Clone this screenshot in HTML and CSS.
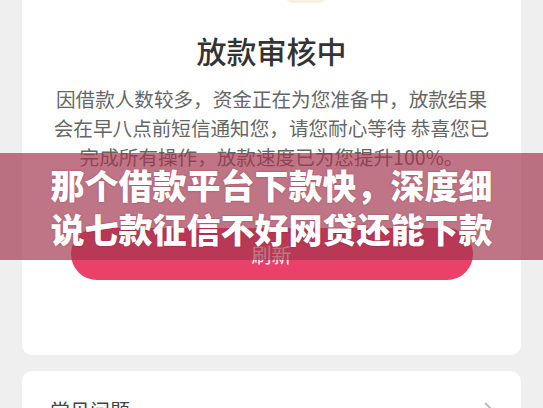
FILE: index.html
```html
<!DOCTYPE html>
<html lang="zh-CN">
<head>
    <meta charset="UTF-8">
    <meta name="viewport" content="width=device-width, initial-scale=1.0">
    <title>放款审核中</title>
    <link rel="stylesheet" href="styles.css">
</head>
<body>
    <div class="page">
        <div class="card status-card">
            <div class="status-icon">
                <svg width="120" height="43" viewBox="0 0 120 43">
                    <rect x="73" y="25" width="42" height="18" rx="8" fill="#f6f2e2"/>
                </svg>
            </div>
            <h1 class="status-title">放款审核中</h1>
            <p class="status-text">因借款人数较多，资金正在为您准备中，放款结果<br>会在早八点前短信通知您，请您耐心等待 恭喜您已<br>完成所有操作，放款速度已为您提升100%。</p>
            <button class="refresh-btn" type="button">刷新</button>
        </div>

        <div class="card faq-card">
            <span class="faq-label">常见问题</span>
            <svg class="faq-arrow" width="12" height="20" viewBox="0 0 12 20">
                <polyline points="2,2 10,10 2,18" fill="none" stroke="#bbb" stroke-width="2"/>
            </svg>
        </div>
    </div>

    <div class="banner">
        <p>那个借款平台下款快，深度细</p>
        <p>说七款征信不好网贷还能下款</p>
    </div>
</body>
</html>
```

FILE: styles.css
```css
body {
    font-family: "Noto Sans CJK SC", "Noto Sans", sans-serif;
    background-color: #efefef;
    margin: 0;
    padding: 0;
    overflow: hidden;
}
.page {
    padding: 0 22px;
}
.card {
    background-color: #fff;
    border-radius: 10px;
}
.status-card {
    margin-top: -40px;
    padding: 0 20px 75px;
    text-align: center;
}
.status-icon {
    height: 43px;
    line-height: 0;
}
.status-title {
    margin: 27px 0 0;
    font-size: 30px;
    line-height: 40px;
    font-weight: 500;
    color: #333;
}
.status-text {
    margin: 14px 0 0;
    font-size: 19.6px;
    line-height: 29px;
    color: #666;
}
.refresh-btn {
    display: block;
    width: 402px;
    height: 52px;
    margin: 57px auto 0;
    border: none;
    border-radius: 26px;
    background-color: #e9416a;
    color: #fff;
    font-family: inherit;
    font-size: 20px;
}
.faq-card {
    margin-top: 16px;
    padding: 26px 26px 26px 28px;
    display: flex;
    justify-content: space-between;
    align-items: center;
}
.faq-label {
    font-size: 20px;
    line-height: 28px;
    color: #444;
}
.banner {
    position: absolute;
    top: 153px;
    left: 0;
    right: 0;
    height: 107px;
    padding-top: 10px;
    box-sizing: border-box;
    background-color: rgba(162, 52, 76, 0.68);
    text-align: center;
}
.banner p {
    margin: 0;
    font-size: 34px;
    line-height: 44px;
    font-weight: 900;
    color: #fff;
    text-shadow: 0 0 2px rgba(80, 0, 20, 0.4);
}
```
